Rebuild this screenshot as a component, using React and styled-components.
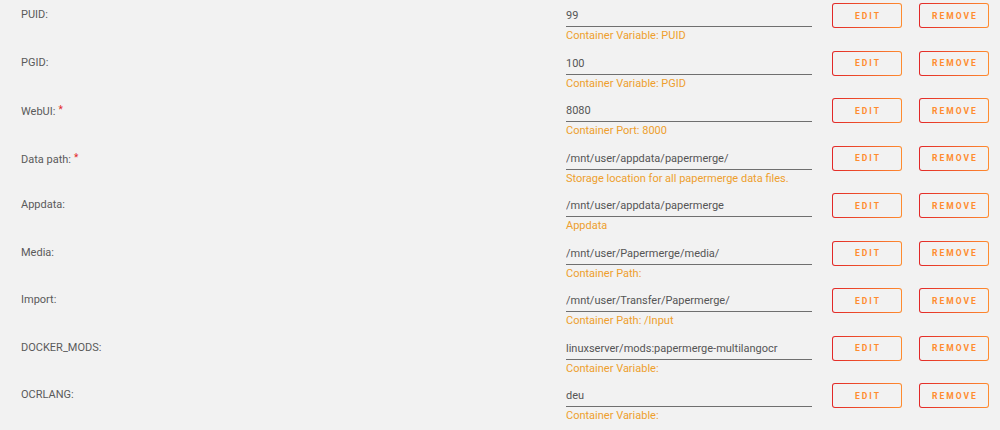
import React from "react";
import styled, { createGlobalStyle } from "styled-components";

const Global = createGlobalStyle`
  html, body { margin: 0; padding: 0; background: #f2f2f2; }
  body { font-family: Roboto, "Liberation Sans", sans-serif; }
`;

const List = styled.div`
  padding: 0 0 0 21px;
  width: 1000px;
  box-sizing: border-box;
`;

const Row = styled.div`
  display: flex;
  align-items: flex-start;
  height: 47.5px;
  padding-top: 3px;
  box-sizing: border-box;
`;

const Label = styled.div`
  width: 545px;
  flex: none;
  box-sizing: border-box;
  padding-top: 1px;
  font-size: 11px;
  line-height: 22px;
  color: #5a5a5a;
`;

const Req = styled.span`
  color: #e22828;
  font-size: 10px;
  vertical-align: 2px;
  margin-left: 3px;
`;

const Field = styled.div`
  width: 246px;
  flex: none;
  display: flex;
  flex-direction: column;
`;

const Value = styled.div`
  height: 23px;
  box-sizing: content-box;
  padding-top: 0;
  line-height: 25px;
  overflow: hidden;
  border-bottom: 1px solid #6f6f6f;
  font-size: 11px;
  color: #555;
  white-space: nowrap;
`;

const Desc = styled.div`
  margin-top: 2px;
  font-size: 11px;
  line-height: 13px;
  color: #ee9f2d;
  white-space: nowrap;
`;

const Buttons = styled.div`
  display: flex;
  flex: none;
  gap: 17px;
  margin-left: 20px;
`;

const Btn = styled.button`
  width: 70px;
  height: 25px;
  flex: none;
  box-sizing: border-box;
  border: 1px solid transparent;
  border-radius: 3px;
  background: linear-gradient(#f2f2f2, #f2f2f2) padding-box,
    linear-gradient(90deg, #e22828 0%, #ff8c2f 100%) border-box;
  color: #ff8c2f;
  font-family: Roboto, "Liberation Sans", sans-serif;
  font-weight: 700;
  font-size: 8.5px;
  letter-spacing: 2px;
  text-transform: uppercase;
  padding: 0 0 0 2px;
  cursor: pointer;
`;

const rows = [
  { label: "PUID:", value: "99", desc: "Container Variable: PUID" },
  { label: "PGID:", value: "100", desc: "Container Variable: PGID" },
  { label: "WebUI:", req: true, value: "8080", desc: "Container Port: 8000" },
  { label: "Data path:", req: true, value: "/mnt/user/appdata/papermerge/", desc: "Storage location for all papermerge data files." },
  { label: "Appdata:", value: "/mnt/user/appdata/papermerge", desc: "Appdata" },
  { label: "Media:", value: "/mnt/user/Papermerge/media/", desc: "Container Path:" },
  { label: "Import:", value: "/mnt/user/Transfer/Papermerge/", desc: "Container Path: /Input" },
  { label: "DOCKER_MODS:", value: "linuxserver/mods:papermerge-multilangocr", desc: "Container Variable:" },
  { label: "OCRLANG:", value: "deu", desc: "Container Variable:" },
];

export default function App() {
  return (
    <>
      <Global />
      <List>
        {rows.map((r) => (
          <Row key={r.label}>
            <Label>
              {r.label}
              {r.req && <Req>*</Req>}
            </Label>
            <Field>
              <Value>{r.value}</Value>
              <Desc>{r.desc}</Desc>
            </Field>
            <Buttons>
              <Btn>Edit</Btn>
              <Btn>Remove</Btn>
            </Buttons>
          </Row>
        ))}
      </List>
    </>
  );
}
